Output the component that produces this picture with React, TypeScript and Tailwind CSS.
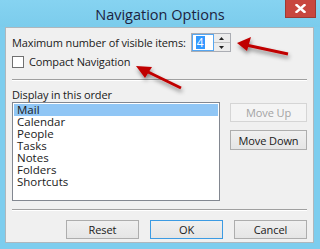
import React from "react";

const font = { fontFamily: '"Segoe UI", "Open Sans", "Noto Sans", sans-serif' };

function Btn({ label, disabled, primary, className }: { label: string; disabled?: boolean; primary?: boolean; className?: string }) {
  return (
    <div
      className={
        "flex items-center justify-center text-[11px] tracking-[-0.1px] leading-none border " +
        (disabled
          ? "border-[#d5d5d5] bg-[#f4f4f4] text-[#a3a3a3] "
          : primary
          ? "border-[#3c9be3] bg-gradient-to-b from-[#f0f0f0] to-[#e5e5e5] text-[#1a1a1a] "
          : "border-[#adadad] bg-gradient-to-b from-[#f0f0f0] to-[#e5e5e5] text-[#1a1a1a] ") +
        (className ?? "")
      }
    >
      {label}
    </div>
  );
}

export default function App() {
  const items = ["Mail", "Calendar", "People", "Tasks", "Notes", "Folders", "Shortcuts"];
  return (
    <div className="relative w-[320px] h-[249px] bg-[#7dcdee] overflow-hidden" style={font}>
      {/* title bar */}
      <div className="relative h-[27px] flex items-center justify-center bg-gradient-to-b from-[#86d3f1] to-[#7bccec]">
        <span className="text-[14.5px] text-[#1c2340] mt-[2px]">Navigation Options</span>
        <div className="absolute right-[4px] top-0 w-[31px] h-[18px] bg-[#c8473f] border border-[#9e3a33] border-t-0 flex items-center justify-center">
          <svg width="11" height="9" viewBox="0 0 11 9">
            <path d="M1.5 1 L9.5 8 M9.5 1 L1.5 8" stroke="#ffffff" strokeWidth="2.4" strokeLinecap="square" />
          </svg>
        </div>
      </div>
      {/* content */}
      <div className="ml-[5px] mr-[6px] h-[216px] bg-[#f0f0f0] border border-[#aeb7bd] px-[6px] text-[11px] tracking-[-0.12px] text-[#1a1a1a]">
        <div className="flex items-center mt-[5px] h-[19px]">
          <span className="leading-none">Maximum number of visible items:</span>
          <div className="ml-[5px] flex h-[19px] border border-[#abadb3]">
            <div className="w-[22px] h-full border border-[#56a6f0] bg-white flex items-center pl-[3px]">
              <span className="bg-[#3399ff] text-white text-[12px] leading-[13px] px-[1px]">4</span>
            </div>
            <div className="w-[16px] flex flex-col">
              <div className="flex-1 border-b border-[#c0c0c0] bg-[#ececec] flex items-center justify-center">
                <svg width="5" height="3" viewBox="0 0 5 3"><path d="M2.5 0 L5 3 L0 3 Z" fill="#222" /></svg>
              </div>
              <div className="flex-1 bg-[#ececec] flex items-center justify-center">
                <svg width="5" height="3" viewBox="0 0 5 3"><path d="M0 0 L5 0 L2.5 3 Z" fill="#222" /></svg>
              </div>
            </div>
          </div>
        </div>
        <div className="flex items-center mt-[3px] h-[13px]">
          <div className="w-[12px] h-[12px] border border-[#707070] bg-white" />
          <span className="ml-[5px] leading-none">Compact Navigation</span>
        </div>
        <div className="mt-[11px] h-px bg-[#a0a0a0] border-b border-white box-content" />
        <div className="mt-[8px] leading-none h-[13px]">Display in this order</div>
        <div className="flex">
          <div className="w-[210px] h-[99px] border border-[#828790] bg-white p-[1px] text-[11.5px] tracking-normal">
            {items.map((it, i) => (
              <div
                key={it}
                className={"h-[12px] leading-[12px] pl-[3px] " + (i === 0 ? "bg-[#90c6f5]" : "")}
              >
                {it}
              </div>
            ))}
          </div>
          <div className="ml-[10px] flex flex-col">
            <Btn label="Move Up" disabled className="w-[77px] h-[19px] mt-[1px]" />
            <Btn label="Move Down" className="w-[77px] h-[20px] mt-[8px]" />
          </div>
        </div>
        <div className="mt-[8px] h-px bg-[#a0a0a0] border-b border-white box-content" />
        <div className="flex justify-end gap-[11px] mt-[9px]">
          <Btn label="Reset" className="w-[73px] h-[19px]" />
          <Btn label="OK" primary className="w-[73px] h-[19px]" />
          <Btn label="Cancel" className="w-[73px] h-[19px]" />
        </div>
      </div>
      {/* annotation arrows */}
      <svg className="absolute left-0 top-0 pointer-events-none" width="320" height="249" viewBox="0 0 320 249">
        <defs>
          <filter id="sh" x="-20%" y="-20%" width="140%" height="160%">
            <feDropShadow dx="1" dy="3" stdDeviation="2" floodColor="#000" floodOpacity="0.45" />
          </filter>
        </defs>
        <g filter="url(#sh)" fill="#c00000" stroke="#c00000">
          <line x1="288" y1="54" x2="246" y2="45" strokeWidth="3" />
          <path d="M237 43 L251 37 L247 51 Z" stroke="none" />
          <line x1="181" y1="88" x2="146" y2="71" strokeWidth="3" />
          <path d="M136 66 L152 67 L145 78 Z" stroke="none" />
        </g>
      </svg>
    </div>
  );
}
